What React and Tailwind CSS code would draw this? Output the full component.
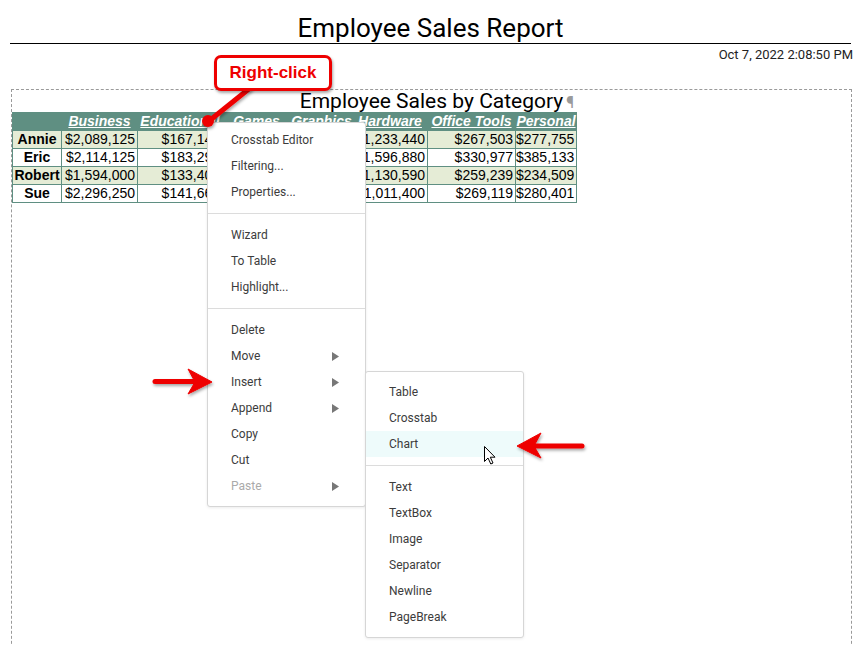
import React from "react";

const columns = ["Business", "Educational", "Games", "Graphics", "Hardware", "Office Tools", "Personal"];

const rows = [
  { name: "Annie", shaded: true, values: ["$2,089,125", "$167,149", "$98,310", "$412,506", "$1,233,440", "$267,503", "$277,755"] },
  { name: "Eric", shaded: false, values: ["$2,114,125", "$183,295", "$104,775", "$455,120", "$1,596,880", "$330,977", "$385,133"] },
  { name: "Robert", shaded: true, values: ["$1,594,000", "$133,405", "$87,640", "$389,215", "$1,130,590", "$259,239", "$234,509"] },
  { name: "Sue", shaded: false, values: ["$2,296,250", "$141,661", "$92,480", "$401,330", "$1,011,400", "$269,119", "$280,401"] },
];

const mainMenu = [
  ["Crosstab Editor"],
  ["Filtering..."],
  ["Properties..."],
  "sep",
  ["Wizard"],
  ["To Table"],
  ["Highlight..."],
  "sep",
  ["Delete"],
  ["Move", true],
  ["Insert", true],
  ["Append", true],
  ["Copy"],
  ["Cut"],
  ["Paste", true, true],
];

const subMenu = [
  ["Table"],
  ["Crosstab"],
  ["Chart", false, false, true],
  "sep",
  ["Text"],
  ["TextBox"],
  ["Image"],
  ["Separator"],
  ["Newline"],
  ["PageBreak"],
];

const Caret = () => (
  <svg width="7" height="9" viewBox="0 0 7 9">
    <polygon points="0,0 7,4.5 0,9" fill="#777" />
  </svg>
);

const MenuList = ({ items }) =>
  items.map((item, i) =>
    item === "sep" ? (
      <div key={i} className="my-[8px] h-px bg-[#dcdcdc]" />
    ) : (
      <div
        key={i}
        className={`flex h-[26px] items-center justify-between pl-[23px] pr-[26px] ${item[3] ? "bg-[#eefbfb]" : ""} ${item[2] ? "text-[#aaaaaa]" : "text-[#3c3c3c]"}`}
      >
        <span>{item[0]}</span>
        {item[1] && <Caret />}
      </div>
    )
  );

export default function App() {
  return (
    <div className="relative h-[645px] w-[857px] overflow-hidden bg-white font-['Roboto',sans-serif] text-black">
      {/* report header */}
      <div className="ml-[10px] mr-[6px] border-b border-black pt-[13px] text-center text-[26px] leading-[30px]">
        Employee Sales Report
      </div>
      <div className="mt-[3px] pr-[4px] text-right text-[13px] leading-[16px] text-[#222]">
        Oct 7, 2022 2:08:50 PM
      </div>

      {/* crosstab area */}
      <div className="ml-[11px] mt-[26px] h-[600px] w-[841px] border border-dashed border-[#9a9a9a]">
        <div className="text-center text-[21px] leading-[22px]">
          <span className="relative">
            Employee Sales by Category
            <span className="absolute left-full top-[3px] ml-[3px] text-[16px] text-[#9a9a9a]">¶</span>
          </span>
        </div>

        <div className="grid w-max grid-cols-[48px_75px_84px_67px_61px_74px_87px_60px] gap-px bg-[#5f8f82] p-px font-['Liberation_Sans',Arial,sans-serif] text-[14px] leading-[17px]">
          <div className="h-[17px]" />
          {columns.map((c) => (
            <div key={c} className="h-[17px] whitespace-nowrap text-center font-bold italic text-white underline">
              {c}
            </div>
          ))}
          {rows.map((r) => (
            <React.Fragment key={r.name}>
              <div className={`h-[17px] text-center font-bold ${r.shaded ? "bg-[#e5ecd6]" : "bg-white"}`}>{r.name}</div>
              {r.values.map((v, i) => (
                <div key={i} className={`h-[17px] pr-[2px] text-right ${r.shaded ? "bg-[#e5ecd6]" : "bg-white"}`}>
                  {v}
                </div>
              ))}
            </React.Fragment>
          ))}
        </div>
      </div>

      {/* context menu */}
      <div className="absolute left-[207px] top-[122px] w-[159px] rounded-[3px] border border-[#d6d6d6] bg-white pb-[7px] pt-[4px] text-[12px] shadow-[0_1px_3px_rgba(0,0,0,0.08)]">
        <MenuList items={mainMenu} />
      </div>

      {/* insert submenu */}
      <div className="absolute left-[365px] top-[371px] w-[159px] rounded-[3px] border border-[#d6d6d6] bg-white py-[7px] text-[12px] shadow-[0_1px_3px_rgba(0,0,0,0.08)]">
        <MenuList items={subMenu} />
      </div>

      {/* mouse pointer */}
      <svg className="absolute left-[484px] top-[446px]" width="13" height="19" viewBox="0 0 13 19">
        <path d="M0.5 0.5 L0.5 15.5 L4 12 L6.8 18 L9 17 L6.3 11.2 L11 11.2 Z" fill="white" stroke="black" strokeWidth="1" strokeLinejoin="round" />
      </svg>

      {/* annotation arrows */}
      <svg className="pointer-events-none absolute left-0 top-0" width="857" height="645">
        <defs>
          <filter id="sh" x="-20%" y="-40%" width="140%" height="180%">
            <feDropShadow dx="1" dy="2" stdDeviation="1.5" floodColor="#000" floodOpacity="0.35" />
          </filter>
        </defs>
        <g filter="url(#sh)" fill="#ee0000" stroke="#ee0000">
          <line x1="155" y1="381.5" x2="196" y2="381.5" strokeWidth="5" strokeLinecap="round" />
          <polygon points="212,382 188,369 195,382 188,394" strokeWidth="1" strokeLinejoin="round" />
          <line x1="535" y1="446" x2="582" y2="446" strokeWidth="5" strokeLinecap="round" />
          <polygon points="517,446 541,433 534,446 541,458" strokeWidth="1" strokeLinejoin="round" />
          <line x1="250" y1="88" x2="209" y2="121" strokeWidth="5" strokeLinecap="round" />
          <circle cx="208" cy="121" r="6" stroke="none" />
        </g>
      </svg>

      {/* callout */}
      <div className="absolute left-[214px] top-[55px] flex h-[36px] w-[118px] items-center justify-center rounded-[7px] border-[3px] border-[#ee0000] bg-white font-['Liberation_Sans',Arial,sans-serif] text-[17px] font-bold text-[#ee0000] shadow-[1px_2px_3px_rgba(0,0,0,0.35)]">
        Right-click
      </div>
    </div>
  );
}
